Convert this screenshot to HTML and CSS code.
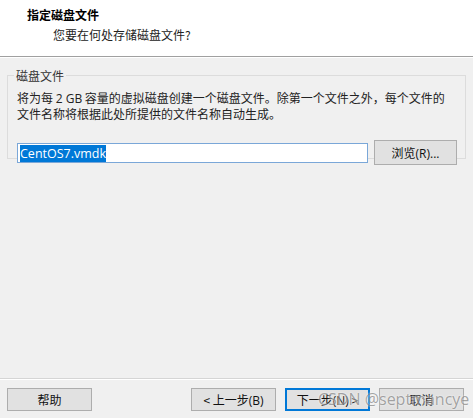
FILE: index.html
```html
<!DOCTYPE html>
<html lang="zh-CN">
<head>
  <meta charset="UTF-8">
  <title>指定磁盘文件</title>
  <link rel="stylesheet" href="styles.css">
</head>
<body>
  <div class="wizard">
    <div class="header">
      <div class="title">指定磁盘文件</div>
      <div class="subtitle">您要在何处存储磁盘文件?</div>
    </div>

    <div class="content">
      <fieldset class="group">
        <legend>磁盘文件</legend>
        <p class="desc">将为每 <span class="lat">2 GB</span> 容量的虚拟磁盘创建一个磁盘文件。除第一个文件之外，每个文件的<br>文件名称将根据此处所提供的文件名称自动生成。</p>
        <div class="file-row">
          <div class="file-input"><span class="sel">CentOS7.vmdk</span></div>
          <button class="btn browse">浏览<span class="lat">(R)...</span></button>
        </div>
      </fieldset>
    </div>

    <div class="footer">
      <button class="btn">帮助</button>
      <div class="nav">
        <button class="btn">&lt; 上一步<span class="lat">(B)</span></button>
        <button class="btn focus">下一步<span class="lat">(N)</span> &gt;</button>
        <button class="btn">取消</button>
      </div>
    </div>
    <div class="watermark">CSDN @septmancye</div>
  </div>
</body>
</html>
```

FILE: styles.css
```css
body {
  margin: 0;
  background: #f0f0f0;
  font-family: "Noto Sans CJK SC", "Noto Sans", sans-serif;
  font-size: 12px;
  color: #000;
}
.lat {
  font-family: "Open Sans", "Noto Sans", sans-serif;
}
.wizard {
  position: relative;
  width: 473px;
  height: 418px;
  display: flex;
  flex-direction: column;
}
.header {
  background: #fff;
  height: 57px;
  border-bottom: 1px solid #a0a0a0;
  box-shadow: 0 1px 0 #fff;
  box-sizing: border-box;
  padding: 6px 0 0 27px;
}
.title {
  font-weight: bold;
  line-height: 17px;
}
.subtitle {
  margin: 3px 0 0 26px;
  color: #222;
  line-height: 17px;
}
.content {
  flex: 1;
  padding: 10px 7px 0 7px;
}
.group {
  margin: 0;
  border: 1px solid #dcdcdc;
  padding: 6px 8px 0 9px;
  height: 84px;
}
.group legend {
  padding: 0 2px;
  margin-left: -3px;
  color: #333;
  line-height: 17px;
}
.desc {
  margin: 0;
  line-height: 15px;
  color: #222;
  white-space: nowrap;
}
.file-row {
  display: flex;
  align-items: center;
  margin-top: 19px;
}
.file-input {
  width: 351px;
  height: 20px;
  box-sizing: border-box;
  border: 1px solid #7aa7d8;
  background: #fff;
  padding: 1px 2px;
  font-family: "Open Sans", "Noto Sans", sans-serif;
  font-size: 12.5px;
  line-height: 17px;
}
.sel {
  background: #0078d7;
  color: #fff;
  display: inline-block;
}
.btn {
  width: 85px;
  height: 23px;
  box-sizing: border-box;
  border: 1px solid #adadad;
  background: #e1e1e1;
  font: inherit;
  color: #111;
  padding: 0;
}
.browse {
  width: 83px;
  height: 25px;
  margin-left: 6px;
}
.focus {
  border: 2px solid #0078d7;
}
.footer {
  height: 40px;
  border-top: 1px solid #d5d5d5;
  box-shadow: inset 0 1px 0 #fff;
  display: flex;
  justify-content: space-between;
  align-items: flex-start;
  padding: 9px 9px 0 7px;
  box-sizing: border-box;
}
.nav {
  display: flex;
  gap: 9px;
}
.watermark {
  position: absolute;
  left: 318px;
  top: 388px;
  font-family: "Open Sans", "Noto Sans", sans-serif;
  font-size: 16px;
  color: rgba(90, 90, 90, 0.55);
  text-shadow: 0 0 2px #fff;
}
```
